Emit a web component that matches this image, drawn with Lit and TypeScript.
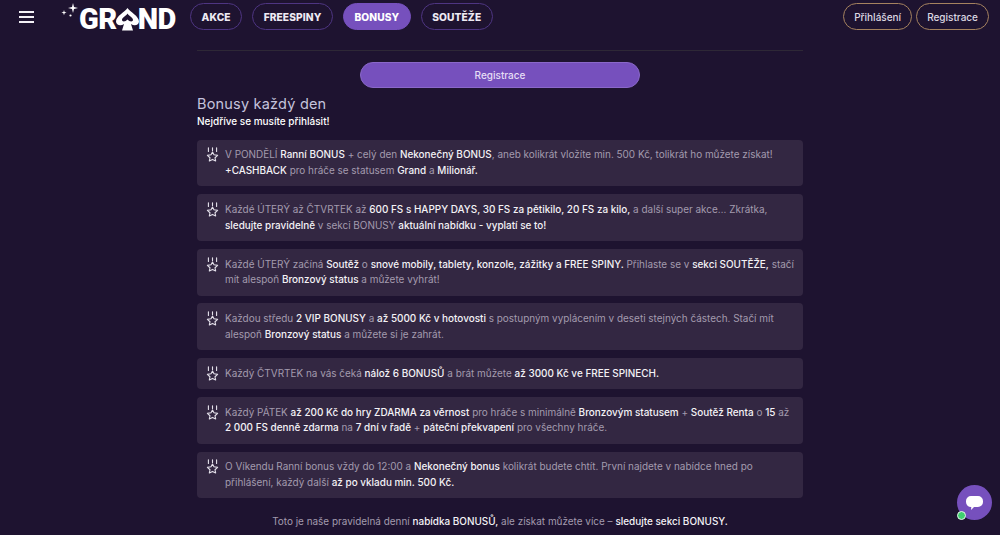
import { LitElement, css, html } from 'lit'
import { customElement } from 'lit/decorators.js'

const crown = html`<svg class="medal" viewBox="0 0 14 16" fill="none" stroke="#e4e0ea" stroke-width="1.2" stroke-linejoin="round" stroke-linecap="round">
  <path d="M2.6 .8v4M7 .8v3M11.4 .8v4" />
  <path d="M7 5.400l1.600 2.900 3.900.6-2.800 2.600.7 3.400L7 13.300l-3.400 1.600.7-3.400L1.500 8.900l3.900-.6z" />
</svg>`

const cards = [
  html`V PONDĚLÍ <b>Ranní BONUS</b> + celý den <b>Nekonečný BONUS</b>, aneb kolikrát vložíte min. 500 Kč, tolikrát ho můžete získat! <b>+CASHBACK</b> pro hráče se statusem <b>Grand</b> a <b>Milionář.</b>`,
  html`Každé ÚTERÝ až ČTVRTEK až <b>600 FS s HAPPY DAYS, 30 FS za pětikilo, 20 FS za kilo,</b> a další super akce… Zkrátka, <b>sledujte pravidelně</b> v sekci BONUSY <b>aktuální nabídku - vyplatí se to!</b>`,
  html`Každé ÚTERÝ začíná <b>Soutěž</b> o <b>snové mobily, tablety, konzole, zážitky a FREE SPINY.</b> Přihlaste se v <b>sekci SOUTĚŽE,</b> stačí mít alespoň <b>Bronzový status</b> a můžete vyhrát!`,
  html`Každou středu <b>2 VIP BONUSY</b> a <b>až 5000 Kč v hotovosti</b> s postupným vyplácením v deseti stejných částech. Stačí mít alespoň <b>Bronzový status</b> a můžete si je zahrát.`,
  html`Každý ČTVRTEK na vás čeká <b>nálož 6 BONUSŮ</b> a brát můžete <b>až 3000 Kč ve FREE SPINECH.</b>`,
  html`Každý PÁTEK <b>až 200 Kč do hry ZDARMA za věrnost</b> pro hráče s minimálně <b>Bronzovým statusem</b> + <b>Soutěž Renta</b> o <b>15</b> až <b>2&nbsp;000 FS denně zdarma</b> na <b>7 dní v řadě</b> + <b>páteční překvapení</b> pro všechny hráče.`,
  html`O Víkendu Ranní bonus vždy do 12:00 a <b>Nekonečný bonus</b> kolikrát budete chtít. První najdete v nabídce hned po přihlášení, každý další <b>až po vkladu min. 500 Kč.</b>`,
]

@customElement('app-root')
export class AppRoot extends LitElement {
  static styles = css`
    :host {
      display: block;
      height: 535px;
      overflow: hidden;
      position: relative;
      background: #1e1330;
      color: #a39bae;
      font-family: Inter, 'Liberation Sans', sans-serif;
    }
    header {
      display: flex;
      align-items: center;
      height: 33px;
      padding: 0 11px 0 19px;
    }
    .burger {
      display: flex;
      flex-direction: column;
      gap: 3px;
      width: 15px;
      margin-right: 45px;
    }
    .burger i {
      height: 2px;
      background: #f3f0f6;
    }
    .logo {
      display: flex;
      align-items: center;
      position: relative;
      color: #fff;
      font: 900 29px/1 Roboto, sans-serif;
      letter-spacing: -.5px;
      width: 96px;
      height: 33px;
      padding-top: 5px;
      box-sizing: border-box;
      margin-right: 15px;
    }
    .stars {
      position: absolute;
      left: -19px;
      top: 1px;
    }
    .spade {
      flex: none;
      width: 23px;
      height: 25px;
      margin: 0 -1px;
    }
    nav {
      display: flex;
      gap: 10px;
    }
    nav a {
      display: flex;
      align-items: center;
      height: 27px;
      box-sizing: border-box;
      padding: 0 10.500px;
      border: 1px solid #4e3582;
      border-radius: 14px;
      color: #eeeaf3;
      font-size: 10.200px;
      font-weight: 800;
      letter-spacing: .1px;
    }
    nav a.active {
      background: #7650bd;
      border-color: #7650bd;
      color: #fff;
    }
    .auth {
      display: flex;
      gap: 4px;
      margin-left: auto;
    }
    .auth a {
      display: flex;
      align-items: center;
      height: 27px;
      box-sizing: border-box;
      padding: 0 10px;
      border: 1px solid #a5825f;
      border-radius: 14px;
      color: #dcd8e2;
      font-size: 10px;
      font-weight: 500;
    }
    main {
      width: 606px;
      margin: 17px auto 0;
      border-top: 1px solid #2e2836;
    }
    .cta {
      display: flex;
      align-items: center;
      justify-content: center;
      width: 280px;
      height: 26.500px;
      box-sizing: border-box;
      margin: 10.700px auto 0;
      background: #7650bd;
      border: 1px solid #8a68c9;
      border-radius: 14px;
      color: #e6def5;
      font-size: 10px;
      font-weight: 500;
    }
    h2 {
      margin: 5.800px 0 0;
      color: #c5c3dd;
      font-size: 14.500px;
      font-weight: 400;
      line-height: 20px;
      letter-spacing: .2px;
    }
    .sub {
      margin: 0 0 10.700px;
      color: #fff;
      font-size: 10px;
      font-weight: 500;
      line-height: 15px;
    }
    .cards {
      display: flex;
      flex-direction: column;
      gap: 7.800px;
    }
    .card {
      display: flex;
      gap: 6px;
      padding: 7.800px 4px 7.800px 9px;
      background: #332742;
      border-radius: 4px;
      font-size: 9.950px;
      line-height: 15.600px;
    }
    .card b, .foot b {
      color: #f4f2f6;
      font-weight: 500;
    }
    .medal {
      flex: none;
      width: 13px;
      height: 15px;
    }
    .foot {
      margin: 15.500px 0 0;
      text-align: center;
      font-size: 9.950px;
      line-height: 15.600px;
    }
    .chat {
      position: absolute;
      left: 957px;
      top: 485px;
      width: 35px;
      height: 35px;
      display: flex;
      align-items: center;
      justify-content: center;
      border-radius: 50%;
      background: #7650bd;
    }
    .dot {
      position: absolute;
      left: 0;
      top: 26px;
      width: 7px;
      height: 7px;
      border-radius: 50%;
      background: #3fd06f;
      border: 1px solid #e8f5ec;
    }
  `

  render() {
    return html`
      <header>
        <div class="burger"><i></i><i></i><i></i></div>
        <div class="logo">
          <svg class="stars" width="20" height="20" viewBox="0 0 20 20" fill="#fff">
            <path d="M13 2l1 4 4 1-4 1-1 4-1-4-4-1 4-1z" />
            <path d="M4 9l.6 2 2 .6-2 .6-.6 2-.6-2-2-.6 2-.6z" />
            <circle cx="10.500" cy="14.500" r="1.100" />
          </svg>
          GR<svg class="spade" viewBox="0 0 23 25">
            <path fill="#fff" fill-rule="evenodd" d="M11.500 1C14 5 23 9 23 14.500c0 3.500-4.500 5-8 2.500l2 6.500H6l2-6.500c-3.500 2.500-8 1-8-2.500C0 9 9 5 11.500 1zM11.500 6.500C10 9 6 10.500 6 13c0 2 3.500 2 5.500-.5 2 2.500 5.500 2.500 5.500.5 0-2.500-4-4-5.500-6.500z" />
          </svg>ND
        </div>
        <nav>
          <a>AKCE</a>
          <a>FREESPINY</a>
          <a class="active">BONUSY</a>
          <a>SOUTĚŽE</a>
        </nav>
        <div class="auth">
          <a>Přihlášení</a>
          <a>Registrace</a>
        </div>
      </header>
      <main>
        <div class="cta">Registrace</div>
        <h2>Bonusy každý den</h2>
        <p class="sub">Nejdříve se musíte přihlásit!</p>
        <div class="cards">
          ${cards.map(c => html`<div class="card">${crown}<div>${c}</div></div>`)}
        </div>
        <p class="foot">Toto je naše pravidelná denní <b>nabídka BONUSŮ,</b> ale získat můžete více – <b>sledujte sekci BONUSY.</b></p>
      </main>
      <div class="chat">
        <svg width="17" height="16" viewBox="0 0 17 16" fill="#fff">
          <path d="M5 1h7a5 5 0 0 1 5 5v1a5 5 0 0 1-5 5H8l-3 3 .3-3A5 5 0 0 1 0 7V6a5 5 0 0 1 5-5z" />
        </svg>
        <span class="dot"></span>
      </div>
    `
  }
}
